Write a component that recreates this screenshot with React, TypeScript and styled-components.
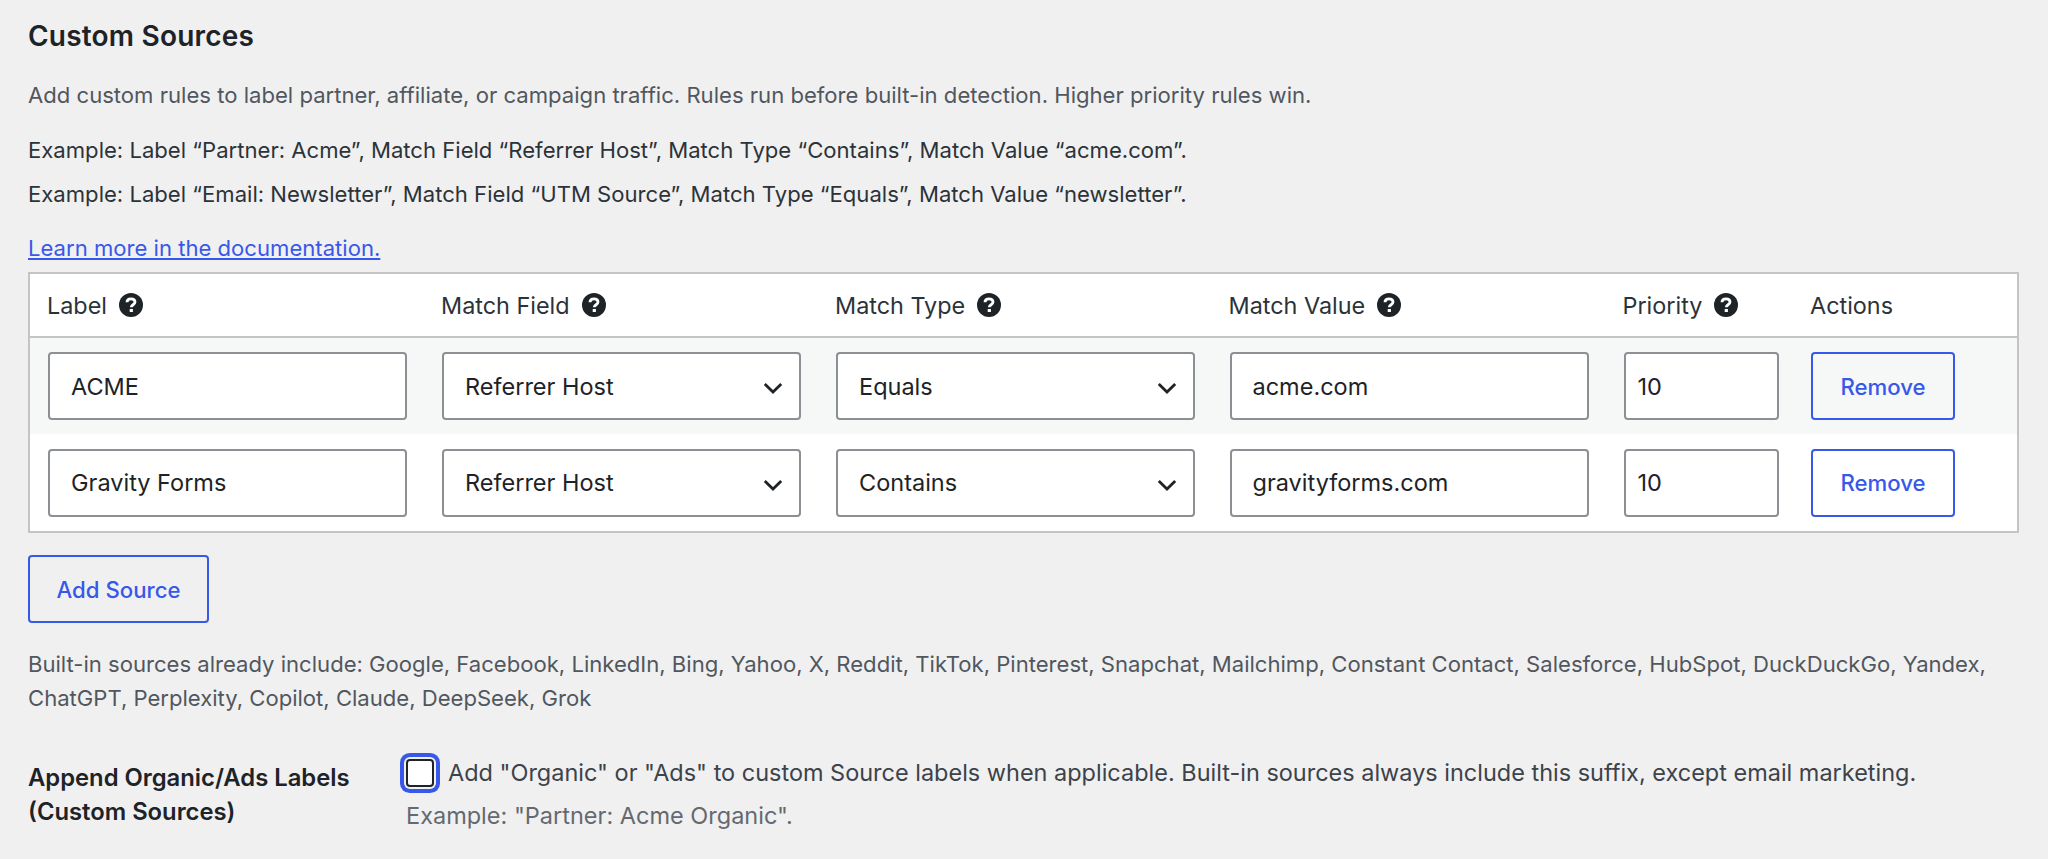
import React from 'react';
import styled, { createGlobalStyle } from 'styled-components';

const Global = createGlobalStyle`
  html, body { margin: 0; padding: 0; background: #f0f0f1; }
  body { font-family: Inter, "Liberation Sans", sans-serif; color: #1d2327; }
  * { box-sizing: border-box; }
`;

const Page = styled.div`
  width: 2048px;
  height: 859px;
  overflow: hidden;
  padding: 17px 29px 0 28px;
`;
const Heading = styled.h2`
  margin: 0;
  font-size: 28px;
  line-height: 38px;
  font-weight: 600;
  letter-spacing: 0.2px;
  color: #1d2327;
`;
const Description = styled.p`
  margin: 23px 0 0;
  font-size: 22.1px;
  line-height: 34px;
  color: #50575e;
`;
const Example = styled.p<{ $top: number }>`
  margin: ${p => p.$top}px 0 0;
  font-size: 22.1px;
  line-height: 34px;
  color: #2c3338;
`;
const DocLink = styled.a`
  display: block;
  width: fit-content;
  margin-top: 20px;
  font-size: 22.1px;
  line-height: 34px;
  color: #3858e9;
  text-decoration: underline;
`;
const Table = styled.div`
  margin-top: 7px;
  width: 1991px;
  background: #fff;
  border: 2px solid #c3c4c7;
`;
const Row = styled.div<{ $alt?: boolean; $head?: boolean }>`
  display: grid;
  grid-template-columns: 394px 394px 393.5px 394px 187.5px 144px;
  align-items: center;
  padding: 0 0 0 18px;
  height: ${p => (p.$head ? 64 : p.$alt ? 96 : 97)}px;
  background: ${p => (p.$alt ? '#f6f7f7' : '#fff')};
  border-bottom: ${p => (p.$head ? '2px solid #c3c4c7' : 'none')};
`;
const HeadCell = styled.div`
  display: flex;
  align-items: center;
  gap: 12px;
  margin-left: -1px;
  font-size: 23.4px;
  font-weight: 400;
  color: #2c3338;
`;
const field = `
  display: flex;
  align-items: center;
  height: 68px;
  background: #fff;
  border: 2px solid #8c8f94;
  border-radius: 4px;
  font-size: 23.5px;
  color: #1d2327;
`;
const TextField = styled.div`
  ${field}
  width: 359px;
  padding-left: 21px;
`;
const NumberField = styled.div`
  ${field}
  width: 155px;
  padding-left: 12px;
`;
const SelectField = styled.div`
  ${field}
  width: 359px;
  justify-content: space-between;
  padding: 0 14px 0 21px;
`;
const RemoveButton = styled.button`
  width: 144px;
  height: 68px;
  padding: 0;
  font-family: inherit;
  font-size: 22.2px;
  font-weight: 500;
  color: #3858e9;
  background: transparent;
  border: 2px solid #3858e9;
  border-radius: 4px;
`;
const AddButton = styled(RemoveButton)`
  display: block;
  width: 181px;
  margin-top: 22px;
`;
const Sources = styled.p`
  margin: 24px 0 0;
  font-size: 22.08px;
  line-height: 34px;
  color: #50575e;
`;
const Option = styled.div`
  display: grid;
  grid-template-columns: 378px 1fr;
  margin-top: 38px;
`;
const OptionTitle = styled.div`
  padding-top: 8px;
  max-width: 345px;
  font-size: 23.8px;
  line-height: 34px;
  font-weight: 600;
  color: #1d2327;
`;
const OptionLine = styled.div`
  display: flex;
  align-items: center;
  gap: 14px;
  font-size: 23.47px;
  line-height: 34px;
  color: #3c434a;
`;
const CheckBox = styled.span`
  width: 28px;
  height: 28px;
  margin: 6px 0;
  flex: none;
  background: #fff;
  border: 2px solid #1d2327;
  border-radius: 4px;
  box-shadow: 0 0 0 2px #f0f0f1, 0 0 0 6px #3858e9;
`;
const Hint = styled.p`
  margin: 6px 0 0 0;
  font-size: 23.5px;
  line-height: 34px;
  color: #646970;
`;

const HelpIcon = () => (
  <svg width="24" height="24" viewBox="0 0 24 24" aria-hidden="true">
    <circle cx="12" cy="12" r="12" fill="#1d2327" />
    <path d="M8 9.3c0-2.2 1.7-3.5 4-3.5s4 1.2 4 3.2c0 2.8-3.7 2.7-3.7 5.2" fill="none" stroke="#fff" strokeWidth="2.8" />
    <rect x="10.7" y="16" width="3.2" height="3" fill="#fff" />
  </svg>
);
const Chevron = () => (
  <svg width="24" height="24" viewBox="0 0 24 24" aria-hidden="true">
    <path d="M3.8 10l8.2 8 8.2-8" fill="none" stroke="#1d2327" strokeWidth="2.8" />
  </svg>
);
const Head = ({ children }: { children: string }) => (
  <HeadCell>{children}<HelpIcon /></HeadCell>
);

const rows = [
  { label: 'ACME', type: 'Equals', value: 'acme.com', alt: true },
  { label: 'Gravity Forms', type: 'Contains', value: 'gravityforms.com', alt: false },
];

export default function App() {
  return (
    <Page>
      <Global />
      <Heading>Custom Sources</Heading>
      <Description>Add custom rules to label partner, affiliate, or campaign traffic. Rules run before built-in detection. Higher priority rules win.</Description>
      <Example $top={21}>Example: Label “Partner: Acme”, Match Field “Referrer Host”, Match Type “Contains”, Match Value “acme.com”.</Example>
      <Example $top={10}>Example: Label “Email: Newsletter”, Match Field “UTM Source”, Match Type “Equals”, Match Value “newsletter”.</Example>
      <DocLink href="#">Learn more in the documentation.</DocLink>
      <Table>
        <Row $head>
          <Head>Label</Head>
          <Head>Match Field</Head>
          <Head>Match Type</Head>
          <Head>Match Value</Head>
          <Head>Priority</Head>
          <HeadCell>Actions</HeadCell>
        </Row>
        {rows.map(r => (
          <Row key={r.label} $alt={r.alt}>
            <TextField>{r.label}</TextField>
            <SelectField>Referrer Host<Chevron /></SelectField>
            <SelectField>{r.type}<Chevron /></SelectField>
            <TextField>{r.value}</TextField>
            <NumberField>10</NumberField>
            <RemoveButton>Remove</RemoveButton>
          </Row>
        ))}
      </Table>
      <AddButton>Add Source</AddButton>
      <Sources>Built-in sources already include: Google, Facebook, LinkedIn, Bing, Yahoo, X, Reddit, TikTok, Pinterest, Snapchat, Mailchimp, Constant Contact, Salesforce, HubSpot, DuckDuckGo, Yandex, ChatGPT, Perplexity, Copilot, Claude, DeepSeek, Grok</Sources>
      <Option>
        <OptionTitle>Append Organic/Ads Labels (Custom Sources)</OptionTitle>
        <div>
          <OptionLine><CheckBox />Add "Organic" or "Ads" to custom Source labels when applicable. Built-in sources always include this suffix, except email marketing.</OptionLine>
          <Hint>Example: "Partner: Acme Organic".</Hint>
        </div>
      </Option>
    </Page>
  );
}
